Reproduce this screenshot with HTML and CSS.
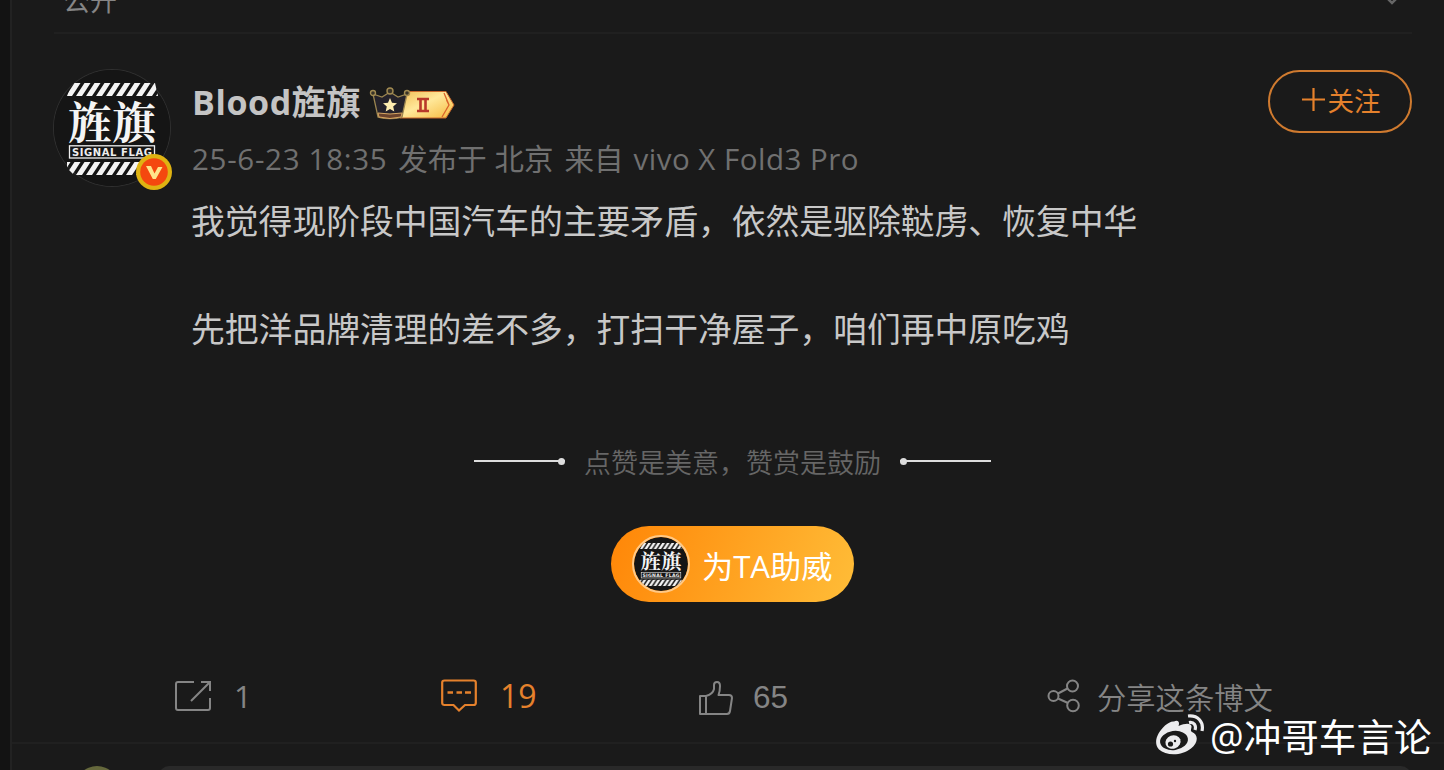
FILE: index.html
```html
<!DOCTYPE html>
<html lang="zh-CN">

<head>
    <meta charset="UTF-8">
    <meta name="viewport" content="width=device-width, initial-scale=1.0">
    <title>微博正文</title>
    <link rel="stylesheet" href="styles.css">
</head>

<body>
    <!-- avatar, used in the header and in the reward button -->
    <svg class="defs" width="0" height="0">
        <defs>
            <pattern id="stripes" width="10" height="13" patternUnits="userSpaceOnUse" patternTransform="translate(12 13)">
                <path d="M0 13L8.500 0H14.500L6 13zM-10 13L-1.500 0H4.500L-4 13z" fill="#f4f4f4"/>
            </pattern>
            <pattern id="stripes2" width="10" height="13" patternUnits="userSpaceOnUse" patternTransform="translate(12 92)">
                <path d="M0 13L8.500 0H14.500L6 13zM-10 13L-1.500 0H4.500L-4 13z" fill="#f4f4f4"/>
            </pattern>
            <symbol id="avatar" viewBox="0 0 116 116">
                <circle cx="58" cy="58" r="58" fill="#151515"/>
                <path d="M18 13H101L104 26H13z" fill="url(#stripes)"/>
                <path d="M13 92H103L97 105H20L13 98z" fill="url(#stripes2)"/>
                <text class="flag-name" x="14" y="68.500" textLength="88" lengthAdjust="spacingAndGlyphs">旌旗</text>
                <rect x="15.500" y="75.800" width="85" height="12.200" fill="none" stroke="#eee" stroke-width="1.300"/>
                <text class="flag-sub" x="18" y="85.500" textLength="80" lengthAdjust="spacing">SIGNAL FLAG</text>
            </symbol>
        </defs>
    </svg>

    <div class="page">
        <div class="top-bar">
            <span>公开</span>
            <svg class="arrow" width="14" height="8" viewBox="0 0 14 8"><path d="M2 1L7 6L12 1" fill="none" stroke="#666" stroke-width="2.500"/></svg>
        </div>

        <article class="post">
            <div class="avatar">
                <svg width="116" height="116"><use href="#avatar"/></svg>
                <svg class="verified" width="38" height="38" viewBox="0 0 38 38">
                    <circle cx="19" cy="19" r="18" fill="#dfb312"/>
                    <circle cx="19" cy="19" r="13.800" fill="#f4480f"/>
                    <path d="M11 13H16L19.500 20.500L23 14H27.500L20.800 26H17.800z" fill="#ffe58a"/>
                </svg>
            </div>
            <div class="main">
                <div class="head">
                    <div class="user">
                        <div class="name-row">
                            <span class="name">Blood旌旗</span>
                            <svg class="vip" width="88" height="36" viewBox="0 0 88 36">
                                <defs>
                                    <linearGradient id="gold" x1="0" y1="0" x2="1" y2="1">
                                        <stop offset="0" stop-color="#f2bc55"/>
                                        <stop offset=".45" stop-color="#ffe89a"/>
                                        <stop offset="1" stop-color="#f5b83d"/>
                                    </linearGradient>
                                </defs>
                                <path d="M37 5.500H77L85 19L77 32H31z" fill="url(#gold)" stroke="#c9672b" stroke-width="1"/>
                                <path d="M75 7L80 19L73 31M77.500 14L80 19L77 24" fill="none" stroke="#d9622a" stroke-width="1.300"/>
                                <path d="M48 13H60M48 25H60M51.500 13V25M56.500 13V25" stroke="#b8382a" stroke-width="2.600"/>
                                <path d="M4 8L13 11L21 6L29 11L38 8L33 31Q21 34 9 31z" fill="#25222a" stroke="#9b8550" stroke-width="1.300"/>
                                <path d="M9 27Q21 29 33 27L32 31Q21 34 10 31z" fill="#6b432c" stroke="#d8a762" stroke-width="1"/>
                                <g fill="#393328" stroke="#a28b52" stroke-width="1.400"><circle cx="4" cy="7" r="2.500"/><circle cx="21" cy="5" r="3"/><circle cx="38" cy="7" r="2.500"/></g>
                                <path d="M21 12L23 16.800L28 17.300L24.200 20.600L25.300 25.500L21 22.900L16.700 25.500L17.800 20.600L14 17.300L19 16.800z" fill="#ffedb0"/>
                            </svg>
                        </div>
                        <div class="meta"><span class="time">25-6-23 18:35</span><span class="place">发布于 北京</span><span class="from">来自</span><span class="device">vivo X Fold3 Pro</span></div>
                    </div>
                    <button class="follow">
                        <svg width="23" height="23" viewBox="0 0 23 23"><path d="M11.500 0V23M0 11.500H23" stroke="#e5812c" stroke-width="2.200"/></svg>
                        <span>关注</span>
                    </button>
                </div>
                <div class="text">
                    <p>我觉得现阶段中国汽车的主要矛盾，依然是驱除鞑虏、恢复中华</p>
                    <p>&nbsp;</p>
                    <p>先把洋品牌清理的差不多，打扫干净屋子，咱们再中原吃鸡</p>
                </div>
            </div>
        </article>

        <div class="reward">
            <div class="slogan">
                <i class="line"></i>
                <span>点赞是美意，赞赏是鼓励</span>
                <i class="line right"></i>
            </div>
            <button class="cheer">
                <svg class="cheer-avatar" width="54" height="54"><use href="#avatar"/></svg>
                <span>为TA助威</span>
            </button>
        </div>

        <div class="actions">
            <div class="action repost">
                <svg width="36" height="30" viewBox="0 0 36 30" fill="none" stroke="#858585" stroke-width="2">
                    <path d="M19 1H3Q1 1 1 3V27Q1 29 3 29H33Q35 29 35 27V17M16 20L34 2M26 1H35V10"/>
                </svg>
                <span>1</span>
            </div>
            <div class="action comment">
                <svg width="36" height="34" viewBox="0 0 36 34" fill="none" stroke="#e5812c" stroke-width="2.200">
                    <path d="M3.500 1.500H32.500Q34.800 1.500 34.800 3.500V24Q34.800 26 32.500 26H24L18 31.500L12.500 26H3.500Q1.200 26 1.200 24V3.500Q1.200 1.500 3.500 1.500z"/>
                    <path d="M6.500 13.500H12M15.500 13.500H21M24 13.500H30" stroke-width="2.500"/>
                </svg>
                <span>19</span>
            </div>
            <div class="action like">
                <svg width="34" height="34" viewBox="0 0 34 34" fill="none" stroke="#858585" stroke-width="2" stroke-linejoin="round">
                    <path d="M1 15H7V33H1zM7 15Q14 13 15 8V4Q15 1 18 1Q21 1 21 5Q21 10 19.500 14H30Q33 14 33 17L31 30Q30.500 33 28 33H7"/>
                </svg>
                <span>65</span>
            </div>
            <div class="action share">
                <svg width="34" height="34" viewBox="0 0 34 34" fill="none" stroke="#858585" stroke-width="2">
                    <circle cx="6.500" cy="17" r="5"/><circle cx="25.500" cy="7" r="5.500"/><circle cx="26" cy="26.500" r="5.800"/>
                    <path d="M11 14.500L20.500 9.500M11 19.500L21 24"/>
                </svg>
                <span>分享这条博文</span>
            </div>
        </div>

        <div class="comment-box">
            <span class="my-avatar"></span>
            <span class="input"></span>
        </div>
    </div>

    <div class="watermark">
        <svg width="50" height="42" viewBox="0 0 50 42">
            <path d="M19 7.500C23 5.500 25 8 23.500 12C31 8.500 37 9 36.500 13C36.300 15 35 17 37 18C44 21 43 29 36 34.500C27 42 11 42 4 35.500C-2 29 2 19 10 11.500C13 9 16.500 7 19 7.500z" fill="#ececee"/>
            <ellipse cx="19" cy="26.500" rx="14" ry="9.500" transform="rotate(-8 19 26.500)" fill="#1a1a1a"/>
            <ellipse cx="18" cy="28" rx="7.700" ry="6.700" transform="rotate(-20 18 28)" fill="#ececee"/>
            <circle cx="15.500" cy="30" r="2.600" fill="#1a1a1a"/><circle cx="20" cy="27" r="1.200" fill="#1a1a1a"/>
            <path d="M33 2C43 1 49 8 47 17M34 8.500C39 7.500 41.500 11.500 40 16" fill="none" stroke="#ececee" stroke-width="3.200"/>
        </svg>
        <span>@冲哥车言论</span>
    </div>
</body>

</html>
```
FILE: styles.css
```css
* {
    box-sizing: border-box;
}

body {
    margin: 0;
    height: 770px;
    overflow: hidden;
    background-color: #131313;
    font-family: "Open Sans", "Noto Sans CJK SC", sans-serif;
    color: #858585;
}

button {
    font-family: inherit;
    padding: 0;
    cursor: pointer;
}

svg {
    display: block;
    flex: none;
}

p {
    margin: 0;
}

.defs {
    position: absolute;
}

.page {
    height: 770px;
    margin-left: 10px;
    border-left: 2px solid #222;
    background-color: #1a1a1a;
    overflow: hidden;
}

.top-bar {
    display: flex;
    justify-content: space-between;
    height: 34px;
    margin: 0 32px 0 42px;
    padding: 0 13px 0 9px;
    border-bottom: 2px solid #202020;
    font-size: 27px;
    line-height: 40px;
}

.top-bar span {
    margin-top: -19px;
}

.top-bar .arrow {
    margin-top: -3px;
}

.post {
    display: flex;
    height: 393px;
    padding: 36px 32px 0 42px;
}

.avatar {
    position: relative;
    width: 116px;
    height: 116px;
    border-radius: 50%;
    box-shadow: 0 0 0 1px #303030;
}

.verified {
    position: absolute;
    left: 81px;
    top: 83px;
}

.flag-name {
    font-family: "Noto Serif CJK SC", "Noto Sans CJK SC", serif;
    font-weight: 700;
    font-size: 44px;
    fill: #f4f4f4;
}

.flag-sub {
    font-family: "DejaVu Sans", sans-serif;
    font-weight: 700;
    font-size: 10px;
    fill: #eee;
}

.main {
    flex: 1;
    margin-left: 22px;
}

.head {
    display: flex;
    justify-content: space-between;
    height: 125px;
}

.name-row {
    display: flex;
    height: 64px;
}

.name {
    color: #c4c4c4;
    font-size: 34px;
    font-weight: 700;
    line-height: 65px;
    letter-spacing: 0.6px;
}

.vip {
    margin: 16px 0 0 8px;
}

.meta {
    display: flex;
    gap: 11px;
    font-size: 29.5px;
    line-height: 49px;
    color: #707070;
}

.time {
    letter-spacing: 0.7px;
}

.device {
    margin-left: -1px;
    letter-spacing: 0.5px;
}

.follow {
    display: flex;
    align-items: center;
    justify-content: center;
    gap: 3px;
    width: 144px;
    height: 63px;
    padding: 0 0 4px 2px;
    border: 2px solid #cf7a2f;
    border-radius: 32px;
    background: none;
    color: #e5812c;
    font-size: 26.5px;
}

.text {
    margin-left: -1px;
    color: #c8c8c8;
    font-size: 33.8px;
    line-height: 54px;
}

.text p {
    margin-top: -1px;
    margin-bottom: 1px;
}

.reward {
    display: flex;
    flex-direction: column;
    align-items: center;
    height: 238px;
    padding-top: 11px;
}

.slogan {
    display: flex;
    align-items: center;
    gap: 19px;
    height: 46px;
    margin-left: 9px;
    font-size: 27px;
    font-weight: 350;
    color: #666;
}

.line {
    display: flex;
    align-items: center;
    width: 91px;
    height: 7px;
    background: linear-gradient(#ddd, #ddd) center / 100% 2px no-repeat;
}

.line::after {
    content: "";
    width: 7px;
    height: 7px;
    margin-left: auto;
    border-radius: 50%;
    background-color: #ddd;
}

.line.right::after {
    margin-left: 0;
}

.cheer {
    display: flex;
    align-items: center;
    gap: 12px;
    width: 243px;
    height: 76px;
    margin-top: 42px;
    margin-left: 9px;
    padding-left: 21px;
    border: none;
    border-radius: 38px;
    background: linear-gradient(110deg, #ff8607, #ffbd38);
    color: #fff;
    font-size: 31.2px;
}

.cheer-avatar {
    box-sizing: content-box;
    border: 2px solid #ffc987;
    border-radius: 50%;
}

.actions {
    display: grid;
    grid-template-columns: 266px 258px 348px 1fr;
    height: 79px;
    padding-left: 163px;
    border-bottom: 2px solid #202020;
    font-size: 31px;
}

.action {
    display: flex;
    align-items: center;
    height: 62px;
}

.action span {
    margin-left: 23px;
}

.comment {
    height: 61px;
    color: #e5812c;
    font-size: 32px;
}

.like {
    height: 65px;
    font-family: "Liberation Sans", sans-serif;
    font-size: 31.5px;
}

.action.like span {
    margin-left: 20px;
}

.action.share span {
    margin-left: 16px;
    font-size: 29.3px;
    font-weight: 350;
}

.comment-box {
    display: flex;
    padding: 22px 33px 0 63px;
}

.my-avatar {
    width: 44px;
    height: 44px;
    border-radius: 50%;
    background-color: #65683c;
}

.input {
    flex: 1;
    height: 60px;
    margin-left: 40px;
    border-radius: 10px;
    background-color: #292929;
}

.watermark {
    position: absolute;
    left: 1155px;
    top: 714px;
    display: flex;
    color: #fff;
    font-size: 37.6px;
    line-height: 46px;
}

.watermark span {
    margin-left: 5px;
}
```
